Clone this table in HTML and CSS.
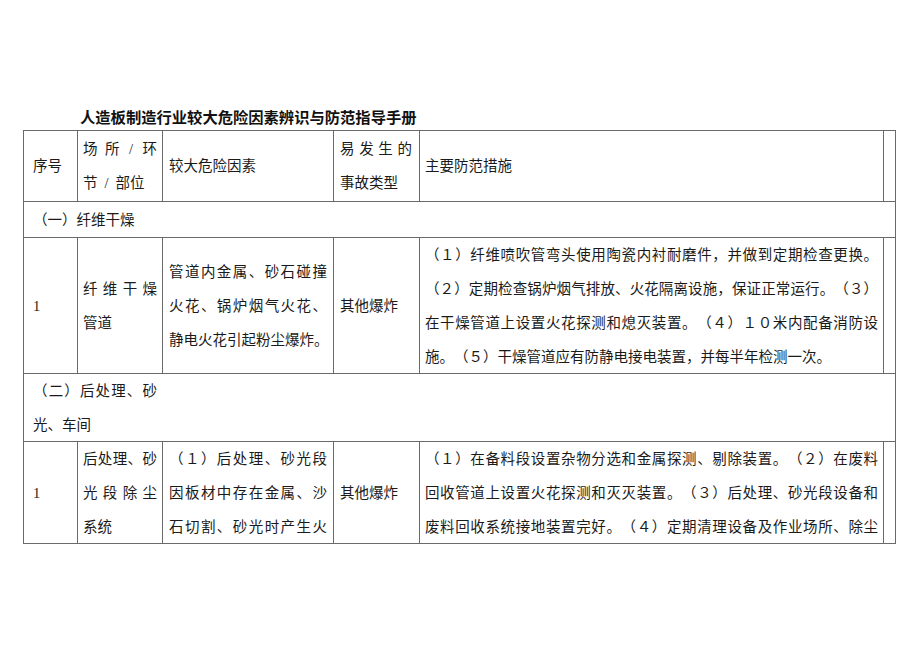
FILE: index.html
```html
<!DOCTYPE html>
<html lang="zh-CN">
<head>
<meta charset="utf-8">
<title>人造板制造行业较大危险因素辨识与防范指导手册</title>
<link rel="stylesheet" href="styles.css">
</head>
<body>
<div class="page">
  <h1 class="doc-title">人造板制造行业较大危险因素辨识与防范指导手册</h1>
  <div class="sheet">
    <!-- header -->
    <div class="cell c1 mid"><span class="ln">序号</span></div>
    <div class="cell c2 mid"><span class="ln spread"><span>场</span><span>所</span><span class="sl">/</span><span>环</span></span><span class="ln">节<span class="sl gap">/</span>部位</span></div>
    <div class="cell c3 mid"><span class="ln">较大危险因素</span></div>
    <div class="cell c4 mid"><span class="ln j">易发生的</span><span class="ln">事故类型</span></div>
    <div class="cell c5 mid"><span class="ln">主要防范措施</span></div>
    <div class="cell c6"></div>

    <!-- section 1 -->
    <div class="cell sec mid"><span class="ln">（一）纤维干燥</span></div>

    <!-- row 1 -->
    <div class="cell c1 mid"><span class="ln">1</span></div>
    <div class="cell c2 mid"><span class="ln j">纤维干燥</span><span class="ln">管道</span></div>
    <div class="cell c3 mid"><span class="ln j">管道内金属、砂石碰撞</span><span class="ln j">火花、锅炉烟气火花、</span><span class="ln">静电火花引起粉尘爆炸。</span></div>
    <div class="cell c4 mid"><span class="ln">其他爆炸</span></div>
    <div class="cell c5 mid">
      <span class="ln j">（１）纤维喷吹管弯头使用陶瓷内衬耐磨件，并做到定期检查更换。</span>
      <span class="ln j">（２）定期检查锅炉烟气排放、火花隔离设施，保证正常运行。（３）</span>
      <span class="ln j">在干燥管道上设置火花探测和熄灭装置。（４）１０米内配备消防设</span>
      <span class="ln">施。（５）干燥管道应有防静电接电装置，并每半年检测一次。</span>
    </div>
    <div class="cell c6"></div>

    <!-- section 2 -->
    <div class="cell sec mid">
      <div class="sec-narrow"><span class="ln j">（二）后处理、砂</span><span class="ln">光、车间</span></div>
    </div>

    <!-- row 2 -->
    <div class="cell c1 mid"><span class="ln">1</span></div>
    <div class="cell c2 mid"><span class="ln j">后处理、砂</span><span class="ln j">光段除尘</span><span class="ln">系统</span></div>
    <div class="cell c3 top"><span class="ln j">（１）后处理、砂光段</span><span class="ln j">因板材中存在金属、沙</span><span class="ln j">石切割、砂光时产生火</span></div>
    <div class="cell c4 mid"><span class="ln">其他爆炸</span></div>
    <div class="cell c5 top">
      <span class="ln j">（１）在备料段设置杂物分选和金属探测、剔除装置。（２）在废料</span>
      <span class="ln j">回收管道上设置火花探测和灭灭装置。（３）后处理、砂光段设备和</span>
      <span class="ln j">废料回收系统接地装置完好。（４）定期清理设备及作业场所、除尘</span>
    </div>
    <div class="cell c6"></div>
  </div>
</div>
</body>
</html>
```

FILE: styles.css
```css
html, body {
  margin: 0;
  padding: 0;
  background: #ffffff;
}

body {
  font-family: "Liberation Serif", "Noto Sans CJK SC", serif;
  font-size: 14.5px;
  color: #1a1a1a;
  text-spacing-trim: space-all;
}

.page {
  padding: 106px 0 0 23px;
  width: 873px;
}

.doc-title {
  margin: 0 0 4px 57px;
  font-family: "Noto Sans CJK SC", sans-serif;
  font-weight: bold;
  font-size: 15.3px;
  line-height: 20px;
  color: #111;
  white-space: nowrap;
}

.sheet {
  display: grid;
  grid-template-columns: 54px 85px 171px 86px 464px 12px;
  grid-template-rows: 71px 36px 136px 68px 102px;
  border-left: 1px solid #6a6a6a;
  border-top: 1px solid #6a6a6a;
  width: 872px;
  box-sizing: content-box;
}

.cell {
  box-sizing: border-box;
  border-right: 1px solid #6a6a6a;
  border-bottom: 1px solid #6a6a6a;
  display: flex;
  flex-direction: column;
  padding: 0 5px;
  line-height: 34px;
  overflow: hidden;
}

.mid {
  justify-content: center;
}

.top {
  justify-content: flex-start;
}

.c1 {
  padding-left: 9px;
}

.c3 {
  padding: 0 6px;
}

.c4 {
  padding: 0 7px 0 6px;
}

.c5 {
  padding: 0 5px;
}

.c6 {
  padding: 0;
}

.sec {
  grid-column: 1 / -1;
  padding-left: 9px;
}

.sec-narrow {
  width: 124px;
}

.ln {
  display: block;
  white-space: nowrap;
}

.ln.j {
  text-align: justify;
  text-align-last: justify;
  white-space: normal;
}

.ln.spread {
  display: flex;
  justify-content: space-between;
}

.sl {
  display: inline-block;
  padding: 0 2px;
}

.sl.gap {
  margin: 0 5px;
}
```
